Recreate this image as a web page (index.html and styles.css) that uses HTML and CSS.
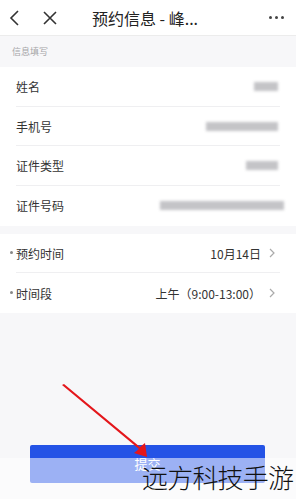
FILE: index.html
```html
<!DOCTYPE html>
<html lang="zh">
<head>
<meta charset="utf-8">
<link rel="stylesheet" href="styles.css">
</head>
<body>
<div class="page">
  <header class="nav">
    <div class="nav-left">
      <svg class="icon" width="14" height="18" viewBox="0 0 14 18"><path d="M10 2 L3 9 L10 16" fill="none" stroke="#333" stroke-width="1.6"/></svg>
      <svg class="icon" width="16" height="16" viewBox="0 0 16 16"><path d="M2 2 L14 14 M14 2 L2 14" fill="none" stroke="#333" stroke-width="1.6"/></svg>
    </div>
    <div class="nav-title">预约信息 - 峰...</div>
    <div class="nav-more"><i></i><i></i><i></i></div>
  </header>

  <div class="section-label">信息填写</div>

  <div class="card">
    <div class="row"><span class="label">姓名</span><span class="blur" style="width:24px"></span></div>
    <div class="row"><span class="label">手机号</span><span class="blur" style="width:72px"></span></div>
    <div class="row"><span class="label">证件类型</span><span class="blur" style="width:32px"></span></div>
    <div class="row"><span class="label">证件号码</span><span class="blur wide" style="width:124px"></span></div>
  </div>

  <div class="card card2">
    <div class="row"><span class="label req">预约时间</span><span class="value">10月14日<svg class="chev" width="8" height="10" viewBox="0 0 8 10"><path d="M2 1 L6 5 L2 9" fill="none" stroke="#aaa" stroke-width="1.2"/></svg></span></div>
    <div class="row"><span class="label req">时间段</span><span class="value">上午（9:00-13:00）<svg class="chev" width="8" height="10" viewBox="0 0 8 10"><path d="M2 1 L6 5 L2 9" fill="none" stroke="#aaa" stroke-width="1.2"/></svg></span></div>
  </div>

  <div class="footer">
    <button class="submit">提交</button>
  </div>

  <div class="veil"></div>
  <svg class="arrow" width="296" height="499" viewBox="0 0 296 499">
    <polygon points="62,385 64,384 140,447 145,443 147,457 134,453 139,449" fill="#e4161b"/>
  </svg>
  <div class="watermark">远方科技手游</div>
</div>
</body>
</html>
```
FILE: styles.css
```css
* { box-sizing: border-box; margin: 0; padding: 0; }
html, body { width: 296px; height: 499px; overflow: hidden; }
body {
  background: #f7f7f9;
  font-family: "Noto Sans CJK SC", "Noto Sans", sans-serif;
  color: #333;
}
.page {
  position: relative;
  height: 499px;
  display: flex;
  flex-direction: column;
}
.nav {
  height: 36px;
  background: #fff;
  border-bottom: 1px solid #ececec;
  display: flex;
  align-items: center;
  padding: 0 10px 0 8px;
}
.nav-left {
  display: flex;
  align-items: center;
  gap: 20px;
  width: 84px;
}
.nav-title {
  font-size: 16px;
  color: #222;
  flex: 1;
  line-height: 20px;
}
.nav-more {
  display: flex;
  gap: 2.5px;
  padding-right: 2px;
}
.nav-more i {
  width: 3.5px;
  height: 3.5px;
  border-radius: 50%;
  background: #444;
}
.section-label {
  height: 31px;
  line-height: 31px;
  font-size: 9px;
  color: #a5a5a8;
  padding-left: 12px;
}
.card {
  background: #fff;
  padding: 0 16px;
}
.card2 {
  margin-top: 8px;
  padding: 0 16px 0 16px;
}
.row {
  height: 39.7px;
  display: flex;
  align-items: center;
  justify-content: space-between;
  border-bottom: 1px solid #efeff1;
}
.row:last-child { border-bottom: none; }
.card2 .row { height: 39.5px; }
.label {
  font-size: 12px;
  color: #333;
  position: relative;
}
.label.req::before {
  content: "";
  position: absolute;
  left: -6px;
  top: 6px;
  width: 3px;
  height: 3px;
  border-radius: 50%;
  background: #888;
}
.blur {
  height: 9px;
  background: #c4c4c7;
  filter: blur(1.5px);
  margin-right: 2px;
}
.blur.wide { margin-right: -4px; }
.value {
  font-size: 12px;
  color: #333;
  display: flex;
  align-items: center;
}
.chev { margin-left: 7px; margin-right: 4px; }
.footer {
  margin-top: auto;
  padding: 0 31px 16px 30px;
}
.submit {
  width: 100%;
  height: 38px;
  border: none;
  border-radius: 2px;
  background: #2453e6;
  color: #fff;
  font-family: "Noto Sans CJK SC", sans-serif;
  font-size: 13px;
  line-height: 38px;
}
.veil {
  position: absolute;
  left: 0; right: 0;
  top: 458px; bottom: 0;
  background: rgba(255,255,255,0.55);
}
.arrow {
  position: absolute;
  left: 0; top: 0;
}
.watermark {
  position: absolute;
  left: 142px;
  top: 459px;
  font-size: 26px;
  font-weight: 300;
  line-height: 36px;
  letter-spacing: -0.8px;
  color: #111;
  white-space: nowrap;
}
```
